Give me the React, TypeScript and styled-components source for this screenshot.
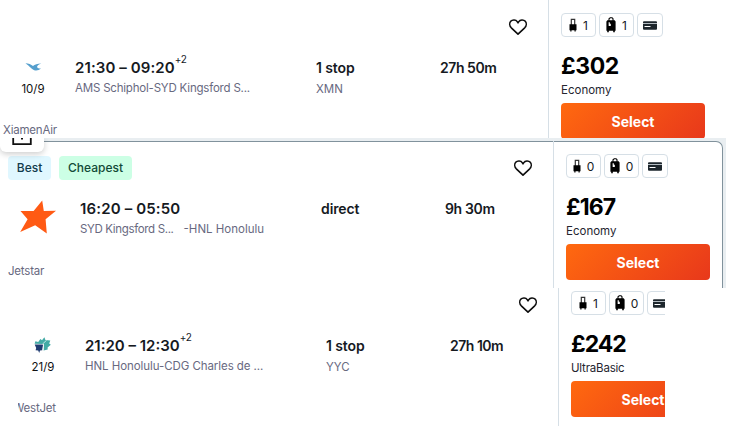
import React from 'react';
import styled, {createGlobalStyle} from 'styled-components';

type Airline = 'xiamen' | 'jetstar' | 'westjet';

interface Flight {
  airline: Airline;
  airlineName: string;
  date?: string;
  times: string;
  dayOffset?: string;
  route: {label: string; spacing: number}[];
  stops: string;
  via?: string;
  duration: string;
  badges: {label: string; kind: 'best' | 'cheapest'}[];
  cabinBags: number;
  checkedBags: number;
  price: string;
  fare: string;
  spacing: {times: number; duration: number; price: number; fare: number};
}

const xiamen: Flight = {
  airline: 'xiamen',
  airlineName: 'XiamenAir',
  date: '10/9',
  times: '21:30 – 09:20',
  dayOffset: '+2',
  route: [{label: 'AMS Schiphol-SYD Kingsford S...', spacing: -0.2}],
  stops: '1 stop',
  via: 'XMN',
  duration: '27h 50m',
  badges: [],
  cabinBags: 1,
  checkedBags: 1,
  price: '£302',
  fare: 'Economy',
  spacing: {times: 0.1, duration: -0.45, price: -0.4, fare: 0},
};

const jetstar: Flight = {
  airline: 'jetstar',
  airlineName: 'Jetstar',
  times: '16:20 – 05:50',
  route: [
    {label: 'SYD Kingsford S...', spacing: -0.35},
    {label: '-HNL Honolulu', spacing: 0},
  ],
  stops: 'direct',
  duration: '9h 30m',
  badges: [
    {label: 'Best', kind: 'best'},
    {label: 'Cheapest', kind: 'cheapest'},
  ],
  cabinBags: 0,
  checkedBags: 0,
  price: '£167',
  fare: 'Economy',
  spacing: {times: 0.15, duration: -0.35, price: -0.9, fare: 0},
};

const westjet: Flight = {
  airline: 'westjet',
  airlineName: 'WestJet',
  date: '21/9',
  times: '21:20 – 12:30',
  dayOffset: '+2',
  route: [{label: 'HNL Honolulu-CDG Charles de ...', spacing: -0.07}],
  stops: '1 stop',
  via: 'YYC',
  duration: '27h 10m',
  badges: [],
  cabinBags: 1,
  checkedBags: 0,
  price: '£242',
  fare: 'UltraBasic',
  spacing: {times: 0, duration: -0.5, price: -1, fare: -0.2},
};

const AirlineLogo: React.FC<{airline: Airline}> = ({airline}) => {
  if (airline === 'jetstar') {
    return (
      <svg width="38" height="36" viewBox="0 0 38 36">
        <path
          d="M23.2 1.5 24.8 12 37 11.8 26.6 20.2 27.8 34.5 16.2 26.2 1.2 33 8.6 20.2 1.5 12 14.6 12z"
          fill="#ff5a14"
        />
      </svg>
    );
  }
  if (airline === 'xiamen') {
    return (
      <svg width="17" height="18" viewBox="0 0 17 18">
        <path
          d="M.5 5.2c3 .2 5.6 1 7.5 2.8 1.7-1.5 4.5-2.6 8.3-2.6-2.8.9-4 2-4.300 3.500.8 1.200 2 1.700 4 1.600-1.500 1.400-3.600 2.100-5.500 1.900C6.900 12 4.800 8.200.5 5.200z"
          fill="#559fcd"
        />
      </svg>
    );
  }
  return (
    <svg width="18" height="18" viewBox="0 0 18 18">
      <path
        d="M.6 7.800 1.400 5.200 4.200 6 6.400 3 8 4.300 10.400 1.300 11.400 4 16.300 4.600 15.200 7.500 16.800 8.800 13.600 11.600 13.700 13.600 9.600 14.400 9.800 8z"
        fill="#43aaa5"
      />
      <path d="M.7 8.600H9.200L8.300 14.200 6 14.400 5.200 17 4.200 14.600 1.600 14.200 2.200 12z" fill="#1f3b70" />
      <path d="M8.400 8.200 12.600 4.200" stroke="#e6f6f5" strokeWidth=".8" />
      <path d="M9.500 8.300 8.900 14.300" stroke="#fff" strokeWidth=".8" />
    </svg>
  );
};
AirlineLogo.displayName = 'AirlineLogo';

const CabinBagIcon: React.FC = () => (
  <svg width="8" height="14" viewBox="0 0 8 14">
    <path d="M2.3 7V1.3h3.4V7" fill="none" stroke="#333" strokeWidth="1.2" />
    <path d="M.5 6.2h7v6h-.8v1.3H5.5v-1.3h-3v1.3H1.3v-1.3H.5z" fill="#000" />
  </svg>
);
CabinBagIcon.displayName = 'CabinBagIcon';

const CheckedBagIcon: React.FC = () => (
  <svg width="10" height="16" viewBox="0 0 10 16">
    <path d="M3 4V1.7L4.2.8h1.9L7 1.7V4" fill="none" stroke="#000" strokeWidth="1.1" />
    <path d="M1.3 3.3h7.4l.9 1.2v9.3H8.8v1.4H7.2v-1.4H2.8v1.4H1.2v-1.4H.4V4.5z" fill="#000" />
    <path d="M2.6 5.2h1.2v1.6h1v2.3H2.7z" fill="#fff" />
  </svg>
);
CheckedBagIcon.displayName = 'CheckedBagIcon';

const CardIcon: React.FC = () => (
  <svg width="14" height="9" viewBox="0 0 14 9">
    <rect x="0" y=".3" width="14" height="8.4" rx="1" fill="#1d262c" />
    <path d="M0 2.5h14" stroke="#b4bcc2" strokeWidth="1" />
    <path d="M1.5 5.5h6" stroke="#fff" strokeWidth="1" />
  </svg>
);
CardIcon.displayName = 'CardIcon';

const HeartIcon: React.FC = () => (
  <svg width="20" height="18" viewBox="0 0 20 18">
    <path
      d="M10 16.2 3.3 9.8C1.4 7.9 1.3 5 2.7 3.3c1.800-2 5.200-1.700 6.500.3l.8 1.200.8-1.200c1.300-2 4.700-2.300 6.500-.3 1.400 1.700 1.300 4.600-.6 6.500z"
      fill="none"
      stroke="#0c0c0c"
      strokeWidth="1.6"
      strokeLinejoin="round"
    />
  </svg>
);
HeartIcon.displayName = 'HeartIcon';

const Ticket: React.FC<{flight: Flight}> = ({flight}) => (
  <TicketWrapper>
    <Main>
      <Header>
        {flight.badges.map(b => (
          <Badge key={b.label} $kind={b.kind}>
            {b.label}
          </Badge>
        ))}
        <HeartButton type="button" aria-label="Save">
          <HeartIcon />
        </HeartButton>
      </Header>
      <Details>
        <Carrier>
          <LogoBox>
            <AirlineLogo airline={flight.airline} />
          </LogoBox>
          {flight.date !== undefined && <DateLabel>{flight.date}</DateLabel>}
        </Carrier>
        <div>
          <Times $spacing={flight.spacing.times}>
            {flight.times}
            {flight.dayOffset !== undefined && <DayOffset>{flight.dayOffset}</DayOffset>}
          </Times>
          <Route>
            {flight.route.map(part => (
              <RoutePart key={part.label} $spacing={part.spacing}>
                {part.label}
              </RoutePart>
            ))}
          </Route>
        </div>
        <div>
          <Fact $spacing={-0.1}>{flight.stops}</Fact>
          <Via>{flight.via}</Via>
        </div>
        <Fact $spacing={flight.spacing.duration}>{flight.duration}</Fact>
      </Details>
      <AirlineName>{flight.airlineName}</AirlineName>
    </Main>
    <Side>
      <Bags>
        <Bag>
          <CabinBagIcon />
          {flight.cabinBags}
        </Bag>
        <Bag>
          <CheckedBagIcon />
          {flight.checkedBags}
        </Bag>
        <Bag $iconOnly>
          <CardIcon />
        </Bag>
      </Bags>
      <Price $spacing={flight.spacing.price}>{flight.price}</Price>
      <Fare $spacing={flight.spacing.fare}>{flight.fare}</Fare>
      <SelectButton type="button">Select</SelectButton>
    </Side>
  </TicketWrapper>
);
Ticket.displayName = 'Ticket';

const App: React.FC = () => (
  <Page>
    <GlobalStyle />
    <FirstStrip>
      <Ticket flight={xiamen} />
    </FirstStrip>
    <ActiveStrip>
      <ActiveCard>
        <Ticket flight={jetstar} />
      </ActiveCard>
      <Popover>
        <svg width="20" height="8" viewBox="0 0 20 8">
          <path d="M1.2 0v6.2h17.6V0" fill="none" stroke="#111" strokeWidth="1.8" />
          <path d="M9 0h2v1.5H9z" fill="#111" />
        </svg>
      </Popover>
    </ActiveStrip>
    <LastStrip>
      <Ticket flight={westjet} />
    </LastStrip>
  </Page>
);
App.displayName = 'App';

export default App;

const GlobalStyle = createGlobalStyle`
  body {
    margin: 0;
    background-color: #fff;
    font-family: Inter, 'Liberation Sans', sans-serif;
  }
`;

const Page = styled.div`
  width: 734px;
  height: 432px;
  overflow: hidden;
  background-color: #fff;
`;

const Strip = styled.section`
  box-sizing: border-box;
  overflow: hidden;
`;

const FirstStrip = styled(Strip)`
  width: 716px;
  height: 138px;
`;

const ActiveStrip = styled(Strip)`
  position: relative;
  width: 726px;
  height: 150px;
  padding-top: 3px;
  background-color: #e9eef1;
`;

const ActiveCard = styled.div`
  box-sizing: border-box;
  width: 723px;
  height: 160px;
  padding-left: 5px;
  border: 1px solid #81929c;
  border-width: 1px 1px 0 0;
  border-radius: 0 7px 0 0;
  background-color: #fff;

  > div {
    margin-top: -1px;
  }
`;

const LastStrip = styled(Strip)`
  width: 647px;
  height: 138px;
  margin-left: 18px;

  > div {
    margin: -10px 0 0 -8px;
  }
`;

// Hangs over the top edge of the highlighted ticket
const Popover = styled.div`
  position: absolute;
  top: 0;
  left: 0;
  box-sizing: border-box;
  width: 44px;
  height: 14px;
  padding-left: 12px;
  border-radius: 0 0 6px 6px;
  background-color: #fff;
  box-shadow: 0 2px 6px #00000033;

  svg {
    display: block;
  }
`;

const TicketWrapper = styled.div`
  display: flex;
  width: 717px;
  height: 160px;
`;

const Main = styled.div`
  box-sizing: border-box;
  width: 548px;
  flex-shrink: 0;
  padding: 15px 20px 0 3px;
`;

const Header = styled.div`
  display: flex;
  align-items: center;
  gap: 8px;
  height: 24px;
`;

const Badge = styled.span<{$kind: 'best' | 'cheapest'}>`
  box-sizing: border-box;
  width: ${p => (p.$kind === 'best' ? 43 : 73)}px;
  border-radius: 4px;
  background-color: ${p => (p.$kind === 'best' ? '#e0f7ff' : '#ccffe5')};
  color: ${p => (p.$kind === 'best' ? '#123c4d' : '#124a37')};
  font-size: 12px;
  font-weight: 550;
  line-height: 24px;
  text-align: center;
  white-space: nowrap;
`;

const HeartButton = styled.button`
  display: flex;
  margin-left: auto;
  padding: 0;
  border: 0;
  background: none;
`;

const Details = styled.div`
  display: grid;
  grid-template-columns: 72px 241px 124px auto;
  height: 63px;
  padding-top: 19px;
  box-sizing: border-box;
`;

const Carrier = styled.div`
  display: flex;
  flex-direction: column;
  align-items: center;
  width: 60px;
`;

const LogoBox = styled.div`
  display: flex;
  align-items: flex-start;
  justify-content: center;
  height: 18px;
`;

const DateLabel = styled.span`
  margin-top: 4px;
  color: #111;
  font-size: 11.5px;
  line-height: 18px;
`;

const Times = styled.div<{$spacing: number}>`
  display: flex;
  color: #161a1f;
  font-size: 15px;
  font-weight: 600;
  line-height: 20px;
  letter-spacing: ${p => p.$spacing}px;
  white-space: nowrap;
`;

const DayOffset = styled.span`
  margin-top: -5px;
  font-size: 10px;
  font-weight: 400;
  line-height: 12px;
  letter-spacing: -0.3px;
`;

const Route = styled.div`
  display: flex;
  gap: 10px;
  margin-top: 1px;
  color: #68697f;
  font-size: 11.5px;
  line-height: 18px;
  white-space: nowrap;
`;

const RoutePart = styled.span<{$spacing: number}>`
  letter-spacing: ${p => p.$spacing}px;
`;

const Fact = styled.div<{$spacing: number}>`
  color: #161a1f;
  font-size: 14px;
  font-weight: 600;
  line-height: 20px;
  letter-spacing: ${p => p.$spacing}px;
  white-space: nowrap;
`;

const Via = styled.div`
  margin-top: 2px;
  color: #68697f;
  font-size: 11.5px;
  line-height: 18px;
`;

const AirlineName = styled.div`
  margin-top: 19px;
  color: #68697f;
  font-size: 11.5px;
  line-height: 19px;
  letter-spacing: -0.2px;
`;

const Side = styled.div`
  display: flex;
  flex-direction: column;
  padding: 13px 0 0 12px;
  border-left: 1px solid #d6dfe6;
`;

const Bags = styled.div`
  display: flex;
  gap: 3px;
`;

const Bag = styled.span<{$iconOnly?: boolean}>`
  display: flex;
  align-items: center;
  justify-content: center;
  gap: 6px;
  box-sizing: border-box;
  width: ${p => (p.$iconOnly ? 26 : 35)}px;
  height: 24px;
  border: 1px solid #d6dfe6;
  border-radius: 4px;
  color: #161a1f;
  font-size: 12px;
`;

const Price = styled.div<{$spacing: number}>`
  margin-top: 15px;
  color: #000;
  font-size: 23px;
  font-weight: 650;
  line-height: 28px;
  letter-spacing: ${p => p.$spacing}px;
`;

const Fare = styled.div<{$spacing: number}>`
  margin-top: 2px;
  color: #25252f;
  font-size: 11.5px;
  line-height: 16px;
  letter-spacing: ${p => p.$spacing}px;
`;

const SelectButton = styled.button`
  width: 144px;
  height: 36px;
  margin-top: 5px;
  padding: 0;
  border: 0;
  border-radius: 4px;
  background: linear-gradient(135deg, #ff690f 0%, #e8381b 100%);
  color: #fff;
  font-family: inherit;
  font-size: 14px;
  font-weight: 700;
`;
